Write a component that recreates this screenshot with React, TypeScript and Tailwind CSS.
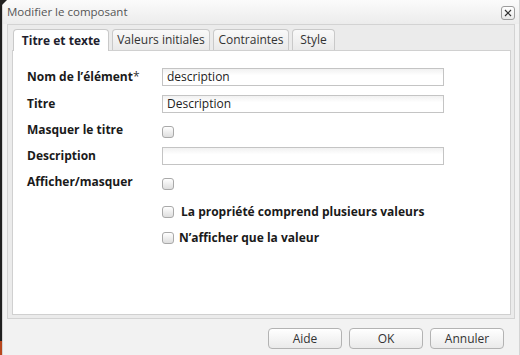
export default function App() {
  const font = "font-['Open_Sans','Liberation_Sans',Arial,sans-serif]";
  return (
    <div className={`relative w-[520px] h-[355px] flex bg-[#f2f2f2] overflow-hidden ${font}`}>
      {/* desktop sliver on the left */}
      <div className="w-[2px] flex flex-col">
        <div className="flex-1 bg-[#1f1f1f]" />
        <div className="h-[14px] bg-[#b8471d]" />
      </div>

      <div className="flex-1 flex flex-col border-l border-r border-[#d4d4d4]">
        {/* Title bar */}
        <div className="h-[24px] flex items-center justify-between pl-[4px] pr-[4px] bg-gradient-to-b from-[#fbfbfb] to-[#ececec]">
          <span className="text-[11.5px] text-[#555]">Modifier le composant</span>
          <button className="w-[14px] h-[14px] mt-[1px] border border-[#9c9c9c] rounded-[3px] bg-gradient-to-b from-white to-[#e9e9e9] flex items-center justify-center">
            <svg width="8" height="8" viewBox="0 0 8 8">
              <path d="M1 1 L7 7 M7 1 L1 7" stroke="#333" strokeWidth="1.2" />
            </svg>
          </button>
        </div>

        {/* Tab panel */}
        <div className="mx-[4px] h-[295px] border border-[#d3d3d3] bg-[#ebebeb] pl-[4px] pr-[3px] pb-[3px] flex flex-col">
          <div className="h-[25px] flex items-end gap-[3px] pl-[1px]">
            <div className="w-[96px] h-[22px] -mb-px z-10 border border-b-0 border-[#c9c9c9] rounded-t-[4px] bg-white flex items-center justify-center text-[12px] font-bold text-[#1e1e2e]">
              Titre et texte
            </div>
            <div className="w-[98px] h-[21px] border border-b-0 border-[#c9c9c9] rounded-t-[4px] bg-gradient-to-b from-[#f9f9f9] to-[#e9e9e9] flex items-center justify-center text-[12px] text-[#333]">
              Valeurs initiales
            </div>
            <div className="w-[76px] h-[21px] border border-b-0 border-[#c9c9c9] rounded-t-[4px] bg-gradient-to-b from-[#f9f9f9] to-[#e9e9e9] flex items-center justify-center text-[12px] text-[#333]">
              Contraintes
            </div>
            <div className="w-[43px] h-[21px] border border-b-0 border-[#c9c9c9] rounded-t-[4px] bg-gradient-to-b from-[#f9f9f9] to-[#e9e9e9] flex items-center justify-center text-[12px] text-[#333]">
              Style
            </div>
          </div>

          <div className="flex-1 bg-white border border-[#d0d0d0] pl-[14px] pt-[17px] flex flex-col">
            <Row label="Nom de l’élément" required>
              <Field value="description" />
            </Row>
            <Row label="Titre" className="mt-[9px]">
              <Field value="Description" />
            </Row>
            <Row label="Masquer le titre" className="mt-[8px]">
              <Check className="mt-[3px]" />
            </Row>
            <Row label="Description" className="mt-[8px]">
              <Field value="" />
            </Row>
            <Row label="Afficher/masquer" className="mt-[8px]">
              <Check className="mt-[4px]" />
            </Row>
            <div className="mt-[12px] h-[18px] pl-[135px] flex items-center gap-[7px]">
              <Check />
              <span className="text-[12px] font-bold text-[#1a1a1a]">La propriété comprend plusieurs valeurs</span>
            </div>
            <div className="mt-[8px] h-[18px] pl-[135px] flex items-center gap-[5px]">
              <Check />
              <span className="text-[12px] font-bold text-[#1a1a1a]">N’afficher que la valeur</span>
            </div>
          </div>
        </div>

        {/* Footer buttons */}
        <div className="flex-1 flex items-start justify-end gap-[7px] pt-[9px] pr-[15px]">
          <Btn label="Aide" />
          <Btn label="OK" />
          <Btn label="Annuler" />
        </div>
      </div>

      {/* corner pointer fragment */}
      <svg className="absolute left-0 top-0" width="8" height="6" viewBox="0 0 8 6">
        <path d="M0 0 L7 0 L2 5 L0 5 Z" fill="#222" />
      </svg>
    </div>
  );
}

function Row({
  label,
  required,
  className = "",
  children,
}: {
  label: string;
  required?: boolean;
  className?: string;
  children: React.ReactNode;
}) {
  return (
    <div className={`h-[18px] flex items-center ${className}`}>
      <div className="w-[135px] text-[12px] font-bold text-[#1a1a1a]">
        {label}
        {required && <span className="font-normal text-[#333]">*</span>}
      </div>
      {children}
    </div>
  );
}

function Field({ value }: { value: string }) {
  return (
    <div className="w-[282px] h-[18px] border border-[#c4c4c4] bg-gradient-to-b from-[#f1f1f1] to-white to-[40%] px-[4px] flex items-center text-[12px] text-[#222]">
      {value}
    </div>
  );
}

function Check({ className = "" }: { className?: string }) {
  return (
    <span
      className={`inline-block w-[12px] h-[12px] rounded-[3px] border border-[#a9a9a9] bg-gradient-to-b from-white to-[#dedede] ${className}`}
    />
  );
}

function Btn({ label }: { label: string }) {
  return (
    <button className="w-[74px] h-[21px] rounded-[4px] border border-[#b3b3b3] bg-gradient-to-b from-white to-[#eaeaea] text-[12px] text-[#333]">
      {label}
    </button>
  );
}
